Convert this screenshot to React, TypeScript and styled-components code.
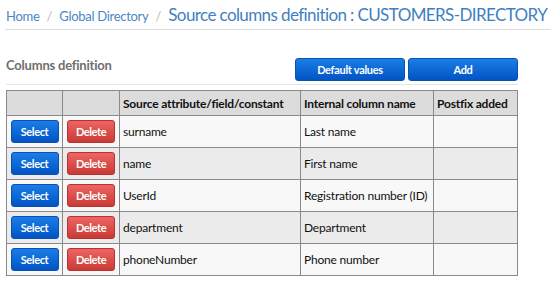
import React from "react";
import styled, { createGlobalStyle } from "styled-components";

type column = {
  source: string;
  internal: string;
  postfix: string;
};

const columns: column[] = [
  { source: "surname", internal: "Last name", postfix: "" },
  { source: "name", internal: "First name", postfix: "" },
  { source: "UserId", internal: "Registration number (ID)", postfix: "" },
  { source: "department", internal: "Department", postfix: "" },
  { source: "phoneNumber", internal: "Phone number", postfix: "" },
];

const App: React.FC = () => {
  return (
    <Page>
      <GlobalStyle />
      <Breadcrumb>
        <Crumb>Home</Crumb>
        <Sep>/</Sep>
        <Crumb>Global Directory</Crumb>
        <Sep>/</Sep>
        <Title>Source columns definition : CUSTOMERS-DIRECTORY</Title>
      </Breadcrumb>
      <Section>
        <SectionHead>
          <Label>Columns definition</Label>
          <Actions>
            <WideButton>Default values</WideButton>
            <WideButton>Add</WideButton>
          </Actions>
        </SectionHead>
        <Table>
          <colgroup>
            <col style={{ width: 56 }} />
            <col style={{ width: 57 }} />
            <col style={{ width: 181 }} />
            <col style={{ width: 133 }} />
            <col />
          </colgroup>
          <thead>
            <tr>
              <Th />
              <Th />
              <Th>Source attribute/field/constant</Th>
              <Th>Internal column name</Th>
              <Th>Postfix added</Th>
            </tr>
          </thead>
          <tbody>
            {columns.map((c, i) => (
              <Row key={c.source} $odd={i % 2 === 1}>
                <Td $center>
                  <SmallButton $tone="blue">Select</SmallButton>
                </Td>
                <Td $center>
                  <SmallButton $tone="red">Delete</SmallButton>
                </Td>
                <Td>{c.source}</Td>
                <Td>{c.internal}</Td>
                <Td>{c.postfix}</Td>
              </Row>
            ))}
          </tbody>
        </Table>
      </Section>
    </Page>
  );
};

export default App;

const GlobalStyle = createGlobalStyle`
  body {
    margin: 0;
    background: #fff;
    font-family: Lato, "Noto Sans", sans-serif;
  }
`;

const Page = styled.div`
  width: 551px;
  height: 286px;
  overflow: hidden;
`;

const Breadcrumb = styled.div`
  display: flex;
  align-items: baseline;
  gap: 7px;
  height: 30px;
  box-sizing: border-box;
  margin-left: 5px;
  padding: 4px 0 0 1px;
  border-bottom: 1px solid #dedede;
  white-space: nowrap;
`;

const Crumb = styled.span`
  font-size: 13px;
  letter-spacing: -0.3px;
  color: #4a86c5;
`;

const Sep = styled.span`
  font-size: 13px;
  color: #bbb;
`;

const Title = styled.span`
  font-size: 17px;
  color: #3f7fc2;
  letter-spacing: -0.6px;
`;

const Section = styled.div`
  width: 512px;
  margin-left: 6px;
`;

const SectionHead = styled.div`
  display: flex;
  align-items: flex-end;
  justify-content: space-between;
  height: 55px;
  box-sizing: border-box;
  padding-bottom: 3px;
  border-bottom: 1px solid #e6e6e6;
  margin-bottom: 5px;
`;

const Label = styled.div`
  font-size: 13px;
  font-weight: 700;
  letter-spacing: -0.2px;
  color: #707070;
  padding-bottom: 8px;
`;

const Actions = styled.div`
  display: flex;
  gap: 3px;
`;

const WideButton = styled.button`
  width: 110px;
  height: 23px;
  border: 1px solid #0a52b0;
  border-radius: 3px;
  background: linear-gradient(#1a7ee6, #0254c4);
  color: #fff;
  font-family: inherit;
  font-size: 11px;
  font-weight: 700;
  letter-spacing: -0.3px;
  padding: 0;
`;

const Table = styled.table`
  width: 512px;
  table-layout: fixed;
  border-collapse: collapse;
  font-size: 12px;
  letter-spacing: -0.2px;
  color: #111;
`;

const Th = styled.th`
  height: 24px;
  background: #dcdcdc;
  border: 1px solid #8a8a8a;
  text-align: left;
  padding: 0 3px;
  font-size: 12px;
  font-weight: 700;
  letter-spacing: -0.2px;
  color: #111;
  white-space: nowrap;
  overflow: hidden;
`;

const Row = styled.tr<{ $odd: boolean }>`
  background: ${(p) => (p.$odd ? "#ebebeb" : "#f8f8f8")};
`;

const Td = styled.td<{ $center?: boolean }>`
  height: 31px;
  border: 1px solid #8a8a8a;
  padding: 0 ${(p) => (p.$center ? "0" : "3px")};
  text-align: ${(p) => (p.$center ? "center" : "left")};
  white-space: nowrap;
`;

const SmallButton = styled.button<{ $tone: "blue" | "red" }>`
  width: 48px;
  height: 23px;
  padding: 0;
  border-radius: 3px;
  border: 1px solid ${(p) => (p.$tone === "blue" ? "#0a52b0" : "#b8332f")};
  background: ${(p) =>
    p.$tone === "blue"
      ? "linear-gradient(#1a7ee6, #0254c4)"
      : "linear-gradient(#ec6562, #c93a36)"};
  color: #fff;
  font-family: inherit;
  font-size: 11px;
  font-weight: 700;
  letter-spacing: -0.4px;
  vertical-align: middle;
`;
